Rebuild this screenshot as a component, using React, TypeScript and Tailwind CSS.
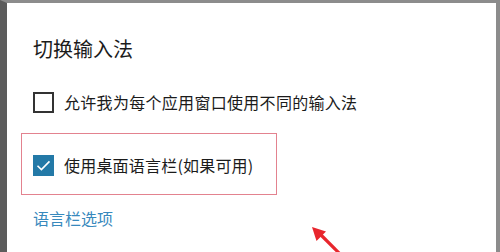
import React from "react";

function Box({ checked }: { checked?: boolean }) {
  if (checked) {
    return (
      <div className="h-[21px] w-[21px] shrink-0 bg-[#2379a7] flex items-center justify-center">
        <svg width="15" height="15" viewBox="0 0 15 15" fill="none">
          <path d="M1.5 7.8 L5.4 11.6 L13.5 3.4" stroke="#ffffff" strokeWidth="1.6" />
        </svg>
      </div>
    );
  }
  return <div className="h-[21px] w-[21px] shrink-0 border-2 border-[#333333] bg-white" />;
}

export default function App() {
  return (
    <div
      className="relative h-[252px] w-[500px] overflow-hidden border-t-[3px] border-l-[7px] border-r-[4px] border-t-[#8c8c8c] border-l-[#5c5c5c] border-r-[#8c8c8c] bg-white text-[#1b1b1b]"
      style={{ fontFamily: '"Noto Sans CJK SC", "Noto Sans", sans-serif' }}
    >
      <div className="flex flex-col pl-[14px] pt-[32px]">
        <h1 className="pl-[12px] text-[20px] leading-[28px] font-normal">切换输入法</h1>

        <div className="mt-[28px] flex items-center gap-[10px] pl-[12px]">
          <Box />
          <span className="text-[16px] leading-[22px] tracking-[0.3px]">允许我为每个应用窗口使用不同的输入法</span>
        </div>

        <div className="mt-[20px] flex h-[62px] w-[256px] items-center gap-[10px] border border-[#e3828f] pl-[11px] pt-[2px]">
          <Box checked />
          <span className="text-[16px] leading-[22px] tracking-[0.2px]">使用桌面语言栏(如果可用)</span>
        </div>

        <a className="mt-[12px] pl-[12px] text-[16px] leading-[22px] text-[#3889bd]">语言栏选项</a>
      </div>

      <svg className="absolute left-[301px] top-[220px]" width="50" height="40" viewBox="0 0 50 40">
        <path d="M12 11 L40 39" stroke="#e8262d" strokeWidth="3.2" />
        <path d="M4 4 L18 8.5 L8.5 18 Z" fill="#e8262d" />
      </svg>
    </div>
  );
}
